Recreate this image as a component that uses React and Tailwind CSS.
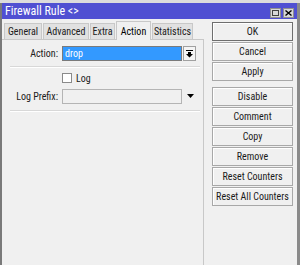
import React from "react";

const font = { fontFamily: '"Roboto Condensed", "DejaVu Sans Condensed", sans-serif' };

function Btn({ children, def }) {
  return (
    <div
      className={`h-[19px] w-[81px] flex items-center justify-center text-[10px] text-[#1a1a1a] bg-[#f0f0f0] border ${def ? "border-[#6e6e6e]" : "border-[#a8a8a8]"} shadow-[inset_1px_1px_0_#ffffff]`}
    >
      {children}
    </div>
  );
}

function Tab({ children, w, active }) {
  if (active) {
    return (
      <div className={`${w} h-[19px] -mb-px relative z-10 flex items-center justify-center text-[10px] text-black bg-[#f0f0f0] border border-b-0 border-[#c8c8c8]`}>
        {children}
      </div>
    );
  }
  return (
    <div className={`${w} h-[16px] flex items-center justify-center text-[10px] text-[#202020] bg-[#e1e1e1] border border-b-0 border-[#c8c8c8]`}>
      {children}
    </div>
  );
}

export default function App() {
  return (
    <div style={font} className="w-[300px] h-[265px] bg-[#f0f0f0] flex flex-col overflow-hidden">
      <div className="h-[3px] bg-[#dcdcdc]" />
      <div className="flex flex-1">
        <div className="w-[2px] bg-[#7a7a7a]" />
        <div className="flex-1 flex flex-col">
          <div className="h-[16px] bg-[#5050d2] flex items-center justify-between pl-[3px] pr-[3px]">
            <span className="text-white text-[12px] leading-none">Firewall Rule &lt;&gt;</span>
            <div className="flex gap-[2px] mt-[4px]">
              <div className="w-[11px] h-[10px] bg-[#d8d8d8] border border-[#909090] flex items-center justify-center">
                <div className="w-[7px] h-[6px] border border-[#404040]" />
              </div>
              <div className="w-[11px] h-[10px] bg-[#d8d8d8] border border-[#909090] flex items-center justify-center">
                <svg width="7" height="6" viewBox="0 0 7 6">
                  <path d="M0.5 0.5L6.5 5.5M6.5 0.5L0.5 5.5" stroke="#000" strokeWidth="1.4" />
                </svg>
              </div>
            </div>
          </div>
          <div className="flex flex-1">
            <div className="w-[202px] flex flex-col">
              <div className="flex items-end gap-[1px] pl-[2px] mt-[1px] h-[19px]">
                <Tab w="w-[38px]">General</Tab>
                <Tab w="w-[46px]">Advanced</Tab>
                <Tab w="w-[25px]">Extra</Tab>
                <Tab w="w-[35px]" active>Action</Tab>
                <Tab w="w-[41px]">Statistics</Tab>
              </div>
              <div className="flex-1 border-t border-r border-[#c8c8c8] bg-[#f0f0f0] flex flex-col">
                <div className="flex items-center mt-[6px] h-[15px]">
                  <div className="w-[57px] text-right text-[10px] text-[#202020] pr-[1px]">Action:</div>
                  <div className="ml-[3px] w-[120px] h-[15px] bg-[#3399ff] border border-[#7a7a7a] flex items-center pl-[2px] text-[10px] text-white">
                    drop
                  </div>
                  <div className="ml-[1px] w-[13px] h-[15px] bg-[#f4f4f4] border border-[#a0a0a0] flex items-center justify-center">
                    <svg width="7" height="8" viewBox="0 0 7 8">
                      <rect x="0" y="0" width="7" height="1" fill="#000" />
                      <path d="M2 2h3v2h2L3.5 7.5 0 4h2z" fill="#000" />
                    </svg>
                  </div>
                </div>
                <div className="ml-[8px] mr-[3px] mt-[5px] h-[2px] border-t border-[#d8d8d8] border-b border-b-white" />
                <div className="flex items-center mt-[5px] h-[10px] pl-[60px]">
                  <div className="w-[10px] h-[10px] bg-white border border-[#8a8a8a]" />
                  <span className="ml-[4px] text-[10px] text-[#202020]">Log</span>
                </div>
                <div className="flex items-center mt-[6px] h-[15px]">
                  <div className="w-[57px] text-right text-[10px] text-[#202020] pr-[1px]">Log Prefix:</div>
                  <div className="ml-[3px] w-[120px] h-[15px] bg-[#f0f0f0] border border-[#b4b4b4]" />
                  <svg className="ml-[5px] -mt-[1px]" width="7" height="4" viewBox="0 0 7 4">
                    <path d="M0 0h7L3.5 4z" fill="#000" />
                  </svg>
                </div>
                <div className="ml-[8px] mr-[3px] mt-[6px] h-[2px] border-t border-[#d8d8d8] border-b border-b-white" />
              </div>
            </div>
            <div className="ml-[8px] flex flex-col pt-[3px]">
              <div className="flex flex-col gap-[1px]">
                <Btn def>OK</Btn>
                <Btn>Cancel</Btn>
                <Btn>Apply</Btn>
              </div>
              <div className="flex flex-col gap-[1px] mt-[6px]">
                <Btn>Disable</Btn>
                <Btn>Comment</Btn>
                <Btn>Copy</Btn>
                <Btn>Remove</Btn>
                <Btn>Reset Counters</Btn>
                <Btn>Reset All Counters</Btn>
              </div>
            </div>
            <div className="flex-1" />
          </div>
        </div>
        <div className="w-[3px] bg-[#8a8a8a]" />
      </div>
    </div>
  );
}
